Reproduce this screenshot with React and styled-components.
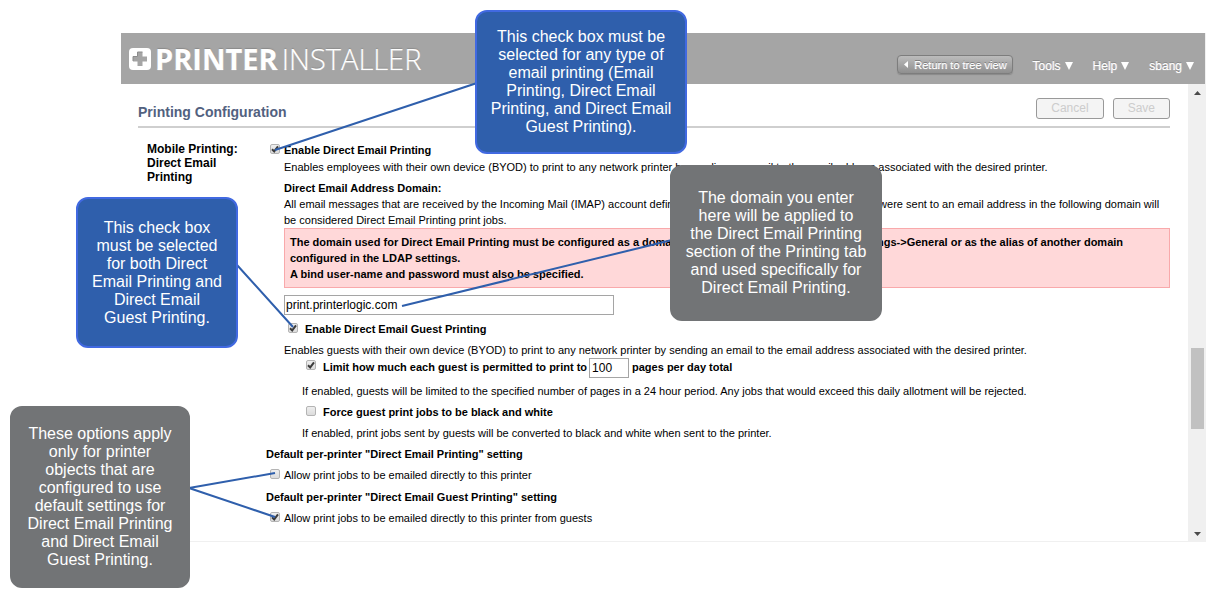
import React from "react";
import styled, { createGlobalStyle, css } from "styled-components";

const GlobalStyle = createGlobalStyle`
  *, *::before, *::after { box-sizing: border-box; }
  body {
    margin: 0;
    background: #fff;
    color: #000;
    font: 11px/16px "Liberation Sans", Arial, sans-serif;
  }
  p, h1, h2, h3 { margin: 0; font-size: inherit; }
  button, input { font-family: inherit; }
`;

const Page = styled.div`
  position: relative;
  padding: 33px 0 57px 121px;
`;

const Header = styled.header`
  display: flex;
  align-items: center;
  justify-content: space-between;
  height: 51px;
  padding: 0 11px 0 8px;
  background: #a5a5a5;
  border-right: 1px solid #f0f0f0;
`;

const Logo = styled.div`
  display: flex;
  align-items: center;
  gap: 4px;
  color: #fff;
  font: 300 29px/32px "Open Sans", sans-serif;
  text-shadow: 0 -1px 1px #8a8a8a, 0 0 1px #fff;
  white-space: nowrap;
  svg { display: block; }
`;

const Brand = styled.span`
  strong { font-weight: 700; margin-right: 4px; }
`;

const Nav = styled.nav`
  display: flex;
  align-items: center;
  gap: 20px;
  padding-top: 12px;
`;

const ReturnButton = styled.button`
  display: flex;
  align-items: center;
  gap: 6px;
  height: 19px;
  padding: 0 5px 0 6px;
  border: 1px solid #7d7d7d;
  border-radius: 4px;
  background: linear-gradient(#bcbcbc, #8f8f8f);
  box-shadow: 0 1px 1px #8a8a8a;
  color: #fff;
  font-size: 11px;
  text-shadow: 0 -1px 0 #777, 0 0 1px #fff;
  white-space: nowrap;
`;

const MenuButton = styled.button`
  padding: 3px 0 0;
  border: 0;
  background: none;
  color: #fff;
  font-size: 12px;
  line-height: 16px;
  text-shadow: 0 -1px 0 #888, 0 0 1px #fff;
  white-space: nowrap;
  svg { margin-left: 4px; }
`;

const Body = styled.div`
  display: flex;
`;

const Panel = styled.main`
  flex: 1;
  min-width: 0;
  padding: 14px 18px 15px 17px;
  border-bottom: 1px solid #f0f0f0;
`;

const TitleBar = styled.div`
  display: flex;
  align-items: flex-start;
  justify-content: space-between;
  height: 30px;
  border-bottom: 2px solid #cfcfcf;
`;

const Title = styled.h1`
  && { font-size: 14px; }
  line-height: 28px;
  color: #52617f;
`;

const Actions = styled.div`
  display: flex;
  gap: 9px;
`;

const ActionButton = styled.button`
  height: 21px;
  padding: 0 14px 2px;
  border: 1px solid #999;
  border-radius: 3px;
  background: #f4f4f4;
  color: #ccc;
  font-size: 12px;
  line-height: 16px;
`;

const Settings = styled.section`
  display: grid;
  grid-template-columns: 100px 1fr;
  column-gap: 19px;
  padding: 14px 0 0 9px;
`;

const SectionName = styled.h2`
  && { font-size: 12px; }
  line-height: 14px;
`;

const Fields = styled.div`
  min-width: 0;
`;

const levels = [0, 4, 18, 22, 36, 40];

const spaced = css`
  margin-top: ${(p) => p.$gap ?? 5}px;
  margin-left: ${(p) => levels[p.$level ?? 0]}px;
`;

const Text = styled.p`
  ${spaced}
  font-weight: ${(p) => (p.$bold ? 700 : 400)};
`;

const FieldLabel = styled.label`
  ${spaced}
  display: block;
  font-weight: 700;
`;

const Option = styled.div`
  ${spaced}
  display: flex;
  align-items: flex-start;
  font-weight: ${(p) => (p.$bold ? 700 : 400)};
  label { padding-left: ${(p) => (p.$wide ? 7 : 4)}px; }
`;

const LimitOption = styled(Option)`
  line-height: 18px;
`;

const Box = styled.span`
  display: grid;
  margin-top: 2px;
  > * { grid-area: 1 / 1; }
  svg { pointer-events: none; }
`;

const BoxInput = styled.input`
  appearance: none;
  width: 10px;
  height: 10px;
  margin: 0;
  border: 1px solid #b4b4b4;
  border-radius: 2px;
  background: linear-gradient(#eee, #dcdcdc);
  & + svg { visibility: hidden; }
  &:checked + svg { visibility: visible; }
`;

const Notice = styled.div`
  margin-left: 18px;
  padding: 5px;
  border: 1px solid #f9a9ab;
  background: #ffd8d9;
  font-weight: 700;
`;

/* Keeps the stretch of a line that lies behind the grey callout free of text. */
const Covered = styled.span`
  display: inline-block;
  width: 172px;
`;

const DomainInput = styled.input`
  display: block;
  width: 330px;
  max-width: 100%;
  height: 20px;
  margin: 7px 0 0 18px;
  padding: 0 1px;
  border: 1px solid #a5a5a5;
  font-size: 12px;
`;

const PagesInput = styled.input`
  width: 40px;
  height: 20px;
  margin: 0 3px 0 2px;
  padding: 0 2px;
  border: 1px solid #a5a5a5;
  font-size: 12px;
`;

const ScrollTrack = styled.div`
  display: grid;
  grid-template-rows: 17px 247fr 81fr 96fr 17px;
  justify-items: center;
  align-items: center;
  width: 18px;
  background: #f0f0f0;
  svg { display: block; }
`;

const Thumb = styled.div`
  grid-row: 3;
  width: 13px;
  height: 100%;
  background: #c1c1c1;
`;

const DownArrow = styled.svg`
  grid-row: 5;
`;

const Connectors = styled.svg`
  position: absolute;
  left: 0;
  top: 0;
  pointer-events: none;
`;

const Callout = styled.aside`
  position: absolute;
  left: ${(p) => p.$x}px;
  top: ${(p) => p.$y}px;
  width: ${(p) => p.$w}px;
  height: ${(p) => p.$h}px;
  display: flex;
  align-items: center;
  justify-content: center;
  border: 2px solid ${(p) => (p.$blue ? "#4169e1" : "#727476")};
  border-radius: 12px;
  background: ${(p) => (p.$blue ? "#2f5fac" : "#727476")};
  color: #fff;
  font-size: 16px;
  line-height: 18px;
  text-align: center;
  white-space: pre-line;
`;

const callouts = [
  { x: 475, y: 10, w: 212, h: 144, blue: true, text: "This check box must be\nselected for any type of\nemail printing (Email\nPrinting, Direct Email\nPrinting, and Direct Email\nGuest Printing)." },
  { x: 670, y: 165, w: 212, h: 156, text: "The domain you enter\nhere will be applied to\nthe Direct Email Printing\nsection of the Printing tab\nand used specifically for\nDirect Email Printing." },
  { x: 76, y: 197, w: 162, h: 151, blue: true, text: "This check box\nmust be selected\nfor both Direct\nEmail Printing and\nDirect Email\nGuest Printing." },
  { x: 10, y: 406, w: 180, h: 182, text: "These options apply\nonly for printer\nobjects that are\nconfigured to use\ndefault settings for\nDirect Email Printing\nand Direct Email\nGuest Printing." },
];

function Checkbox({ id, checked }) {
  return (
    <Box>
      <BoxInput type="checkbox" id={id} defaultChecked={checked} />
      <svg width="10" height="10" viewBox="0 0 10 10" aria-hidden="true">
        <path d="M2 5.2 4.2 7.4 8 2.4" fill="none" stroke="#3c3c3c" strokeWidth="2" />
      </svg>
    </Box>
  );
}

function Menu({ children }) {
  return (
    <MenuButton type="button">
      {children}
      <svg width="8" height="8" viewBox="0 0 8 8" aria-hidden="true">
        <path d="M0 0h8L4 8z" fill="#fff" />
      </svg>
    </MenuButton>
  );
}

export default function App() {
  return (
    <Page>
      <GlobalStyle />
      <Header>
        <Logo>
          <svg width="22" height="22" viewBox="0 0 22 22" aria-hidden="true">
            <rect width="22" height="22" rx="4" fill="#fff" />
            <path d="M8.5 4h5v4.500h4.500v5h-4.500v4.500h-5v-4.500h-4.500v-5h4.500z" fill="#a5a5a5" />
            <path d="M4 13V8.500h4.500V4h5" fill="none" stroke="#8c8c8c" />
          </svg>
          <Brand><strong>PRINTER</strong>INSTALLER</Brand>
        </Logo>
        <Nav>
          <ReturnButton type="button">
            <svg width="4" height="7" viewBox="0 0 4 7" aria-hidden="true">
              <path d="M4 0v7L0 3.5z" fill="#fff" />
            </svg>
            Return to tree view
          </ReturnButton>
          <Menu>Tools</Menu>
          <Menu>Help</Menu>
          <Menu>sbang</Menu>
        </Nav>
      </Header>
      <Body>
        <Panel>
          <TitleBar>
            <Title>Printing Configuration</Title>
            <Actions>
              <ActionButton type="button">Cancel</ActionButton>
              <ActionButton type="button">Save</ActionButton>
            </Actions>
          </TitleBar>
          <Settings>
            <SectionName>Mobile Printing: Direct Email Printing</SectionName>
            <Fields>
              <Option $gap={0} $level={1} $bold>
                <Checkbox id="direct" checked />
                <label htmlFor="direct">Enable Direct Email Printing</label>
              </Option>
              <Text $gap={1} $level={2}>
                Enables employees with their own device (BYOD) to print to any network printer by sending an email to the email address associated with the desired printer.
              </Text>
              <FieldLabel $level={2} htmlFor="domain">Direct Email Address Domain:</FieldLabel>
              <Text $gap={0} $level={2}>
                All email messages that are received by the Incoming Mail (IMAP) account defined<Covered />and were sent to an email address in the following domain will be considered Direct Email Printing print jobs.
              </Text>
              <Notice>
                <p>The domain used for Direct Email Printing must be configured as a domain<Covered />Settings-&gt;General or as the alias of another domain configured in the LDAP settings.</p>
                <p>A bind user-name and password must also be specified.</p>
              </Notice>
              <DomainInput id="domain" type="text" defaultValue="print.printerlogic.com" />
              <Option $gap={6} $level={3} $bold $wide>
                <Checkbox id="guest" checked />
                <label htmlFor="guest">Enable Direct Email Guest Printing</label>
              </Option>
              <Text $level={2}>
                Enables guests with their own device (BYOD) to print to any network printer by sending an email to the email address associated with the desired printer.
              </Text>
              <LimitOption $gap={0} $level={5} $bold $wide>
                <Checkbox id="limit" checked />
                <label htmlFor="limit">Limit how much each guest is permitted to print to</label>
                <PagesInput type="text" aria-label="Pages per day" defaultValue="100" />
                <span>pages per day total</span>
              </LimitOption>
              <Text $level={4}>
                If enabled, guests will be limited to the specified number of pages in a 24 hour period. Any jobs that would exceed this daily allotment will be rejected.
              </Text>
              <Option $level={5} $bold $wide>
                <Checkbox id="mono" />
                <label htmlFor="mono">Force guest print jobs to be black and white</label>
              </Option>
              <Text $level={4}>
                If enabled, print jobs sent by guests will be converted to black and white when sent to the printer.
              </Text>
              <Text $bold>Default per-printer "Direct Email Printing" setting</Text>
              <Option $level={1}>
                <Checkbox id="allow" />
                <label htmlFor="allow">Allow print jobs to be emailed directly to this printer</label>
              </Option>
              <Text $bold $gap={6}>Default per-printer "Direct Email Guest Printing" setting</Text>
              <Option $level={1}>
                <Checkbox id="allow-guests" checked />
                <label htmlFor="allow-guests">Allow print jobs to be emailed directly to this printer from guests</label>
              </Option>
            </Fields>
          </Settings>
        </Panel>
        <ScrollTrack>
          <svg width="7" height="4" viewBox="0 0 7 4" aria-hidden="true">
            <path d="M0 4h7L3.5 0z" fill="#4b4b4b" />
          </svg>
          <Thumb />
          <DownArrow width="7" height="4" viewBox="0 0 7 4" aria-hidden="true">
            <path d="M0 0h7L3.5 4z" fill="#4b4b4b" />
          </DownArrow>
        </ScrollTrack>
      </Body>
      <Connectors width="700" height="540" viewBox="0 0 700 540" aria-hidden="true">
        <path
          d="M477 83 275 150M672 240 402 306M237 265 293 327M275 473 189 488 275 517"
          fill="none"
          stroke="#2f5fac"
          strokeWidth="2"
        />
      </Connectors>
      {callouts.map((c) => (
        <Callout key={c.text} $x={c.x} $y={c.y} $w={c.w} $h={c.h} $blue={c.blue}>
          {c.text}
        </Callout>
      ))}
    </Page>
  );
}
